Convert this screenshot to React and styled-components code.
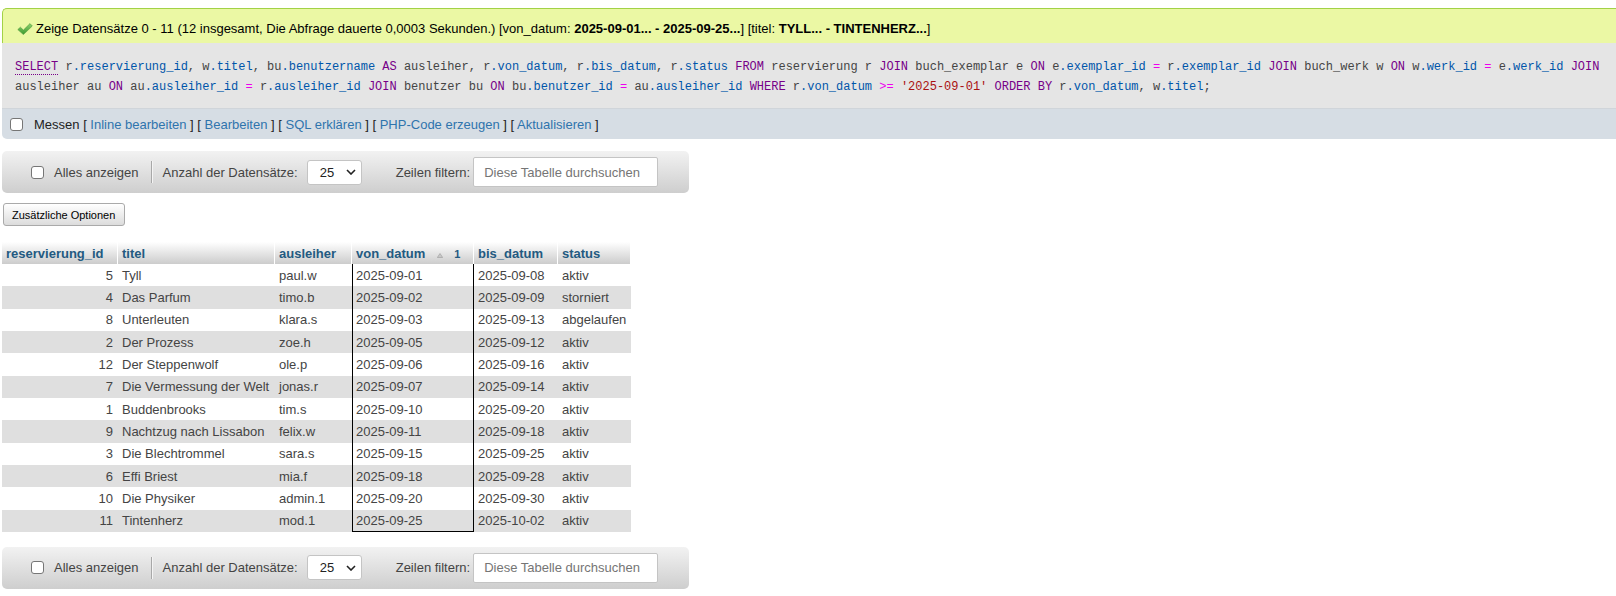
import React from "react";
import styled, { createGlobalStyle } from "styled-components";

const GlobalStyle = createGlobalStyle`
  html, body {
    margin: 0;
    padding: 0;
    background: #fff;
  }
  body {
    font-family: "Liberation Sans", Arial, sans-serif;
    font-size: 13px;
    color: #444;
  }
`;

const Page = styled.div`
  padding: 8px 0 0 2px;
`;

const Success = styled.div`
  display: flex;
  align-items: center;
  gap: 3px;
  height: 35px;
  box-sizing: border-box;
  padding: 5px 0 0 14px;
  background: #ebf8a4;
  border: 1px solid #a2d246;
  border-right: none;
  border-bottom: none;
  border-top-left-radius: 5px;
  color: #000;
  white-space: nowrap;
`;

const SqlOuter = styled.div`
  background: #e5e5e5;
  padding: 14px 6px 11px 13px;
  font-family: "Liberation Mono", "DejaVu Sans Mono", monospace;
  font-size: 12px;
  line-height: 20px;
  color: #444;
  border-bottom: 1px solid #d0d5da;
`;

const Tok = styled.span`
  color: ${({ $kind }) =>
    $kind === "kw"
      ? "#770088"
      : $kind === "op"
      ? "#ee00ee"
      : $kind === "str"
      ? "#aa1111"
      : $kind === "col"
      ? "#0055aa"
      : "#444"};
  ${({ $doc }) => ($doc ? "border-bottom: 1px dotted #770088;" : "")}
`;

const Tools = styled.div`
  display: flex;
  align-items: center;
  height: 30px;
  box-sizing: border-box;
  padding-left: 8px;
  background: #d6dde4;
  border-bottom-left-radius: 5px;
  color: #222;
  white-space: nowrap;
`;

const Box = styled.span`
  display: inline-block;
  width: 13px;
  height: 13px;
  box-sizing: border-box;
  border: 1px solid #767676;
  border-radius: 3px;
  background: #fff;
  margin-right: ${({ $gap }) => $gap}px;
  flex: none;
`;

const Link = styled.a`
  color: #2f74ad;
  text-decoration: none;
  cursor: pointer;
`;

const NavBar = styled.div`
  display: flex;
  align-items: center;
  width: 687px;
  height: 42px;
  box-sizing: border-box;
  margin-top: ${({ $top }) => $top}px;
  padding-left: 29px;
  background: linear-gradient(#f2f2f2, #cecece);
  border-radius: 5px;
  color: #444;
  white-space: nowrap;
`;

const NavLabel = styled.span`
  margin-left: ${({ $left }) => $left || 0}px;
`;

const Separator = styled.span`
  width: 1px;
  height: 22px;
  margin: 0 11px 0 12px;
  background: #a8a8a8;
  box-shadow: 1px 0 0 #f4f4f4;
`;

const FakeSelect = styled.div`
  display: flex;
  align-items: center;
  justify-content: space-between;
  width: 55px;
  height: 25px;
  box-sizing: border-box;
  margin-left: 9px;
  padding: 0 5px 0 12px;
  background: #fff;
  border: 1px solid #c4c4c4;
  border-radius: 3px;
  color: #222;
`;

const SearchInput = styled.input`
  width: 185px;
  height: 30px;
  box-sizing: border-box;
  margin-left: 3px;
  padding: 0 0 0 10px;
  border: 1px solid #c4c4c4;
  border-radius: 2px;
  background: #fff;
  font-family: "Liberation Sans", Arial, sans-serif;
  font-size: 13px;
  color: #444;
  &::placeholder {
    color: #757575;
  }
`;

const OptionsButton = styled.button`
  display: block;
  height: 23px;
  margin: 10px 0 0 1px;
  padding: 0 9px 0 8px;
  font-family: "Liberation Sans", Arial, sans-serif;
  font-size: 11px;
  color: #000;
  background: linear-gradient(#ffffff, #dcdcdc);
  border: 1px solid #aaa;
  border-radius: 3px;
`;

const Table = styled.table`
  margin-top: 16px;
  border-collapse: separate;
  border-spacing: 0;
  table-layout: fixed;
  width: 629px;
`;

const Th = styled.th`
  height: 22px;
  box-sizing: border-box;
  padding: 0 4px;
  text-align: left;
  font-weight: bold;
  color: #235a81;
  background: linear-gradient(#ffffff, #cccccc);
  border-right: 1px solid #fff;
  white-space: nowrap;
`;

const Row = styled.tr`
  background: ${({ $even }) => ($even ? "#dfdfdf" : "#fff")};
`;

const Td = styled.td`
  height: 22.33px;
  box-sizing: border-box;
  padding: 0 ${({ $right }) => ($right ? "5px" : "4px")} 0 4px;
  text-align: ${({ $right }) => ($right ? "right" : "left")};
  color: #444;
  white-space: nowrap;
  ${({ $marked, $last }) =>
    $marked
      ? `border-left: 1px solid #000; border-right: 1px solid #000; padding-left: 3px;${
          $last ? " border-bottom: 1px solid #000;" : ""
        }`
      : ""}
`;

const SortNum = styled.span`
  margin-left: 11px;
  font-size: 11px;
`;

const SQL =
  "SELECT r.reservierung_id, w.titel, bu.benutzername AS ausleiher, r.von_datum, r.bis_datum, r.status FROM reservierung r JOIN buch_exemplar e ON e.exemplar_id = r.exemplar_id JOIN buch_werk w ON w.werk_id = e.werk_id JOIN ausleiher au ON au.ausleiher_id = r.ausleiher_id JOIN benutzer bu ON bu.benutzer_id = au.ausleiher_id WHERE r.von_datum >= '2025-09-01' ORDER BY r.von_datum, w.titel;";

const KEYWORDS = ["SELECT", "AS", "FROM", "JOIN", "ON", "WHERE", "ORDER", "BY"];

function highlight(sql) {
  const out = [];
  const re = /('[^']*')|(>=|=)|([A-Za-z_]+)(\.[A-Za-z_]+)?|(\s+)|([,;])/g;
  let m;
  let i = 0;
  while ((m = re.exec(sql))) {
    if (m[1]) out.push(<Tok key={i++} $kind="str">{m[1]}</Tok>);
    else if (m[2]) out.push(<Tok key={i++} $kind="op">{m[2]}</Tok>);
    else if (m[3]) {
      if (m[4]) {
        out.push(<Tok key={i++}>{m[3]}</Tok>);
        out.push(<Tok key={i++} $kind="col">{m[4]}</Tok>);
      } else if (KEYWORDS.includes(m[3])) {
        out.push(
          <Tok key={i++} $kind="kw" $doc={m[3] === "SELECT"}>
            {m[3]}
          </Tok>
        );
      } else out.push(<Tok key={i++}>{m[3]}</Tok>);
    } else out.push(<Tok key={i++}>{m[0]}</Tok>);
  }
  return out;
}

const rows = [
  [5, "Tyll", "paul.w", "2025-09-01", "2025-09-08", "aktiv"],
  [4, "Das Parfum", "timo.b", "2025-09-02", "2025-09-09", "storniert"],
  [8, "Unterleuten", "klara.s", "2025-09-03", "2025-09-13", "abgelaufen"],
  [2, "Der Prozess", "zoe.h", "2025-09-05", "2025-09-12", "aktiv"],
  [12, "Der Steppenwolf", "ole.p", "2025-09-06", "2025-09-16", "aktiv"],
  [7, "Die Vermessung der Welt", "jonas.r", "2025-09-07", "2025-09-14", "aktiv"],
  [1, "Buddenbrooks", "tim.s", "2025-09-10", "2025-09-20", "aktiv"],
  [9, "Nachtzug nach Lissabon", "felix.w", "2025-09-11", "2025-09-18", "aktiv"],
  [3, "Die Blechtrommel", "sara.s", "2025-09-15", "2025-09-25", "aktiv"],
  [6, "Effi Briest", "mia.f", "2025-09-18", "2025-09-28", "aktiv"],
  [10, "Die Physiker", "admin.1", "2025-09-20", "2025-09-30", "aktiv"],
  [11, "Tintenherz", "mod.1", "2025-09-25", "2025-10-02", "aktiv"],
];

const colWidths = [116, 157, 77, 122, 84, 73];

function CheckIcon() {
  return (
    <svg width="16" height="12" viewBox="0 0 16 12">
      <defs>
        <linearGradient id="ok" x1="0" y1="0" x2="0" y2="1">
          <stop offset="0" stopColor="#8fd170" />
          <stop offset="1" stopColor="#3a9a2c" />
        </linearGradient>
      </defs>
      <path
        d="M0.8 6.6 L3.4 4.2 L6.4 7.1 L13 0.6 L15.3 3 L6.4 11.6 Z"
        fill="url(#ok)"
        stroke="#4f9a3e"
        strokeWidth="0.6"
        strokeLinejoin="round"
      />
    </svg>
  );
}

function Chevron() {
  return (
    <svg width="10" height="6" viewBox="0 0 10 6">
      <path d="M1 1 L5 5 L9 1" fill="none" stroke="#222" strokeWidth="1.6" />
    </svg>
  );
}

function SortAsc() {
  return (
    <svg width="6" height="5" viewBox="0 0 6 5" style={{ marginLeft: 12 }}>
      <path d="M3 0.5 L5.7 4.5 L0.3 4.5 Z" fill="#c8c8c8" stroke="#9a9a9a" strokeWidth="0.6" />
    </svg>
  );
}

function Navigation({ top }) {
  return (
    <NavBar $top={top}>
      <Box $gap={10} />
      <NavLabel>Alles anzeigen</NavLabel>
      <Separator />
      <NavLabel>Anzahl der Datensätze:</NavLabel>
      <FakeSelect>
        <span>25</span>
        <Chevron />
      </FakeSelect>
      <NavLabel $left={34}>Zeilen filtern:</NavLabel>
      <SearchInput placeholder="Diese Tabelle durchsuchen" />
    </NavBar>
  );
}

export default function App() {
  return (
    <>
      <GlobalStyle />
      <Page>
        <Success>
          <CheckIcon />
          <span>
            Zeige Datensätze 0 - 11 (12 insgesamt, Die Abfrage dauerte 0,0003 Sekunden.) [von_datum:{" "}
            <b>2025-09-01... - 2025-09-25...</b>] [titel: <b>TYLL... - TINTENHERZ...</b>]
          </span>
        </Success>
        <SqlOuter>{highlight(SQL)}</SqlOuter>
        <Tools>
          <Box $gap={11} />
          <span>
            Messen [ <Link>Inline bearbeiten</Link> ] [ <Link>Bearbeiten</Link> ] [{" "}
            <Link>SQL erklären</Link> ] [ <Link>PHP-Code erzeugen</Link> ] [{" "}
            <Link>Aktualisieren</Link> ]
          </span>
        </Tools>

        <Navigation top={12} />

        <OptionsButton>Zusätzliche Optionen</OptionsButton>

        <Table>
          <colgroup>
            {colWidths.map((w, i) => (
              <col key={i} style={{ width: w }} />
            ))}
          </colgroup>
          <thead>
            <tr>
              <Th>reservierung_id</Th>
              <Th>titel</Th>
              <Th>ausleiher</Th>
              <Th>
                von_datum
                <SortAsc />
                <SortNum>1</SortNum>
              </Th>
              <Th>bis_datum</Th>
              <Th>status</Th>
            </tr>
          </thead>
          <tbody>
            {rows.map((r, i) => (
              <Row key={r[0]} $even={i % 2 === 1}>
                <Td $right>{r[0]}</Td>
                <Td>{r[1]}</Td>
                <Td>{r[2]}</Td>
                <Td $marked $last={i === rows.length - 1}>
                  {r[3]}
                </Td>
                <Td>{r[4]}</Td>
                <Td>{r[5]}</Td>
              </Row>
            ))}
          </tbody>
        </Table>

        <Navigation top={15} />
      </Page>
    </>
  );
}
